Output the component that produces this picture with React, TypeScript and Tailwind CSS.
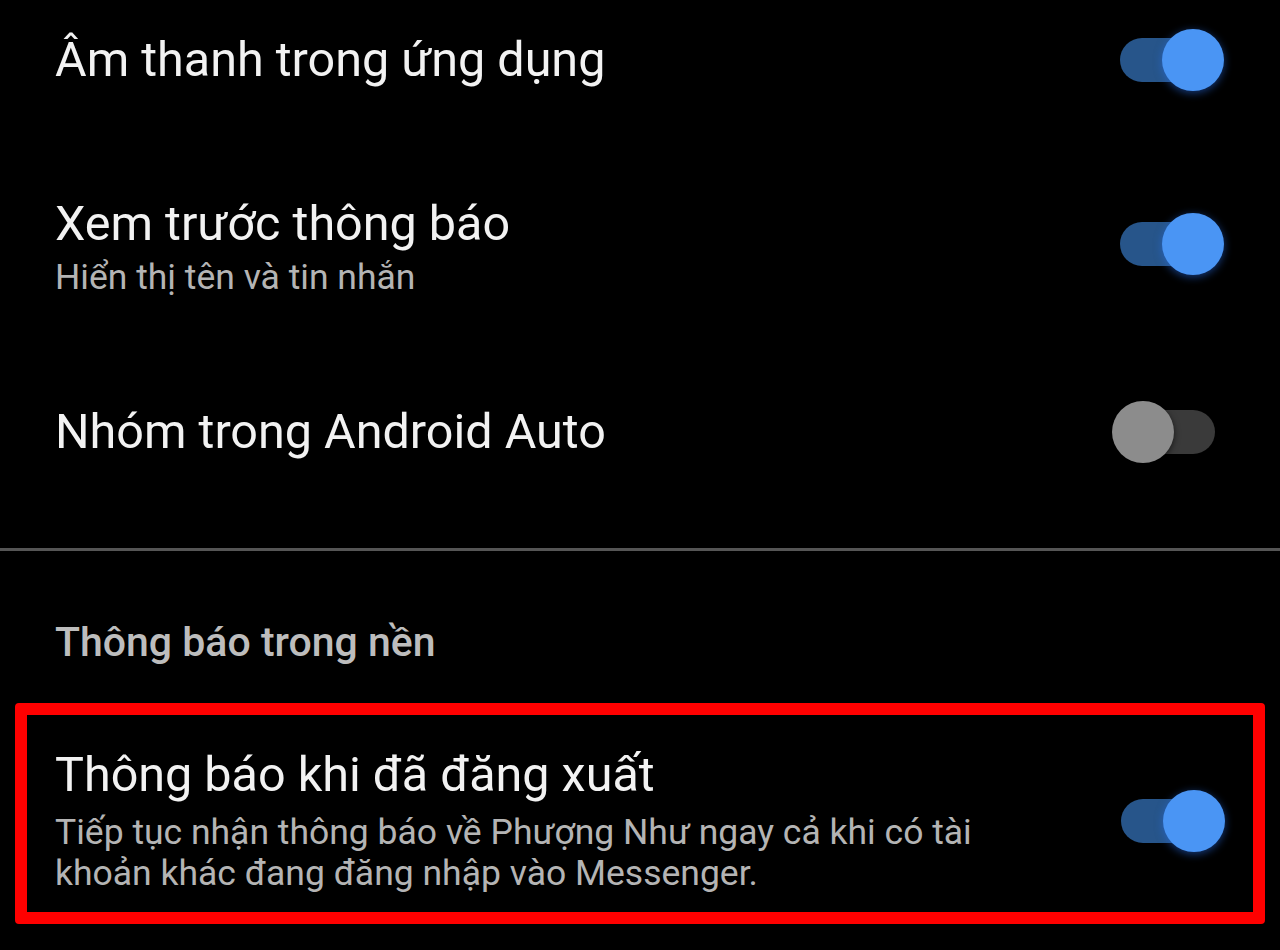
type ToggleProps = {
  on: boolean;
};

function Toggle({ on }: ToggleProps) {
  return (
    <div className="relative h-[64px] w-[112px] shrink-0">
      <div
        className={
          on
            ? "absolute left-[8px] top-[10px] h-[44px] w-[95px] rounded-full bg-[#27558a]"
            : "absolute left-[8px] top-[10px] h-[44px] w-[95px] rounded-full bg-[#3a3a3a]"
        }
      />
      {on ? (
        <div className="absolute right-0 top-[1px] h-[62px] w-[62px] rounded-full bg-[#4a95f4] shadow-[0_2px_8px_rgba(40,110,230,0.55)]" />
      ) : (
        <div className="absolute left-0 top-[1px] h-[62px] w-[62px] rounded-full bg-[#8c8c8c] shadow-[0_2px_6px_rgba(0,0,0,0.6)]" />
      )}
    </div>
  );
}

export default function App() {
  return (
    <div
      className="h-[950px] w-[1280px] overflow-hidden bg-black text-[#f2f2f2]"
      style={{ fontFamily: "Roboto, 'Noto Sans', sans-serif" }}
    >
      <div className="flex h-[120px] items-center justify-between pl-[55px] pr-[56px]">
        <p className="text-[48.5px] leading-[56px]">Âm thanh trong ứng dụng</p>
        <Toggle on />
      </div>

      <div className="flex h-[248px] items-center justify-between pl-[55px] pr-[56px]">
        <div className="pt-[6px]">
          <p className="text-[48.5px] leading-[56px]">Xem trước thông báo</p>
          <p className="mt-[4px] text-[35.5px] leading-[42px] text-[#b4b4b4]">
            Hiển thị tên và tin nhắn
          </p>
        </div>
        <Toggle on />
      </div>

      <div className="flex h-[128px] items-center justify-between pl-[55px] pr-[56px]">
        <p className="text-[48.5px] leading-[56px]">Nhóm trong Android Auto</p>
        <Toggle on={false} />
      </div>

      <div className="mt-[52px] h-[3px] bg-[#555555]" />

      <p className="pl-[55px] pt-[67px] text-[41px] font-medium leading-[48px] text-[#bdbdbd]">
        Thông báo trong nền
      </p>

      <div className="mx-[15px] mt-[37px] flex items-center justify-between rounded-[4px] border-[12px] border-[#ff0000] pb-[18px] pl-[28px] pr-[28px] pt-[32px]">
        <div>
          <p className="text-[48.5px] leading-[56px]">Thông báo khi đã đăng xuất</p>
          <p className="mt-[9px] w-[980px] text-[35.5px] leading-[41px] text-[#b4b4b4]">
            Tiếp tục nhận thông báo về Phượng Như ngay cả khi có tài
            <br />
            khoản khác đang đăng nhập vào Messenger.
          </p>
        </div>
        <Toggle on />
      </div>
    </div>
  );
}
